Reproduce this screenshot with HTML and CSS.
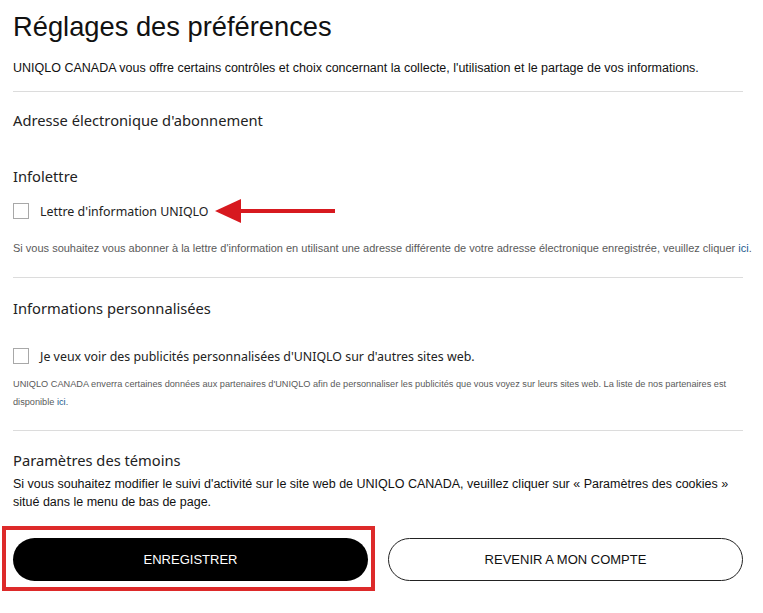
FILE: index.html
```html
<!DOCTYPE html>
<html lang="fr">
<head>
<meta charset="utf-8">
<title>Réglages des préférences</title>
<link rel="stylesheet" href="styles.css">
</head>
<body>
<main class="page">
  <h1 class="title">Réglages des préférences</h1>
  <p class="intro">UNIQLO CANADA vous offre certains contrôles et choix concernant la collecte, l'utilisation et le partage de vos informations.</p>
  <hr class="divider">

  <section class="sec sec-email">
    <h2 class="sec-title">Adresse électronique d'abonnement</h2>
  </section>

  <section class="sec sec-news">
    <h2 class="sec-title">Infolettre</h2>
    <label class="check-row">
      <span class="box"></span>
      <span class="check-label">Lettre d'information UNIQLO</span>
      <svg class="arrow" width="122" height="28" viewBox="0 0 122 28" aria-hidden="true">
        <polygon points="0,14 26,2 26,26" fill="#d7191f"/>
        <rect x="24" y="12" width="96" height="4" fill="#d7191f"/>
      </svg>
    </label>
    <p class="note">Si vous souhaitez vous abonner à la lettre d'information en utilisant une adresse différente de votre adresse électronique enregistrée, veuillez cliquer <a href="#" class="link">ici</a>.</p>
  </section>
  <hr class="divider">

  <section class="sec sec-ads">
    <h2 class="sec-title">Informations personnalisées</h2>
    <label class="check-row check-row-ads">
      <span class="box"></span>
      <span class="check-label">Je veux voir des publicités personnalisées d'UNIQLO sur d'autres sites web.</span>
    </label>
    <p class="note note-small">UNIQLO CANADA enverra certaines données aux partenaires d'UNIQLO afin de personnaliser les publicités que vous voyez sur leurs sites web. La liste de nos partenaires est disponible <a href="#" class="link">ici</a>.</p>
  </section>
  <hr class="divider">

  <section class="sec sec-cookies">
    <h2 class="sec-title">Paramètres des témoins</h2>
    <p class="cookie-text">Si vous souhaitez modifier le suivi d'activité sur le site web de UNIQLO CANADA, veuillez cliquer sur « Paramètres des cookies » situé dans le menu de bas de page.</p>
  </section>

  <div class="actions">
    <div class="btn-wrap">
      <button class="btn btn-primary" type="button">ENREGISTRER</button>
      <span class="highlight" aria-hidden="true"></span>
    </div>
    <button class="btn btn-outline" type="button">REVENIR A MON COMPTE</button>
  </div>
</main>
</body>
</html>
```
FILE: styles.css
```css
* { box-sizing: border-box; }
html, body { margin: 0; padding: 0; background: #fff; }
body {
  font-family: "Liberation Sans", Arial, sans-serif;
  color: #111;
  min-height: 613px;
}
.page {
  width: 763px;
  padding: 11px 10px 30px 13px;
}
.title {
  margin: 0;
  font-size: 27.3px;
  line-height: 32px;
  font-weight: 400;
  color: #111;
}
.intro {
  margin: 16px 0 0;
  font-size: 12.5px;
  line-height: 18px;
  width: 740px;
}
.divider {
  width: 730px;
  margin: 14px 0 0;
  border: 0;
  border-top: 1px solid #dcdcdc;
  height: 0;
}
.sec-title {
  margin: 0;
  font-family: "Noto Sans", "Open Sans", sans-serif;
  font-size: 14.7px;
  font-weight: 400;
  line-height: 20px;
  color: #222;
}
.sec-email { padding-top: 18px; height: 74px; }
.sec-news { padding-bottom: 7px; }
.check-row {
  display: flex;
  align-items: center;
  margin-top: 16px;
  height: 18px;
}
.box {
  width: 16px;
  height: 16px;
  border: 1px solid #a8a8a8;
  background: #fff;
  flex: none;
}
.check-label {
  margin-left: 11px;
  font-family: "Noto Sans", "Open Sans", sans-serif;
  font-size: 12.4px;
  color: #222;
  white-space: nowrap;
}
.arrow { margin-left: 6px; flex: none; }
.note {
  margin: 20px 0 0;
  font-size: 11px;
  line-height: 16px;
  color: #5a5a5a;
  white-space: nowrap;
}
.link { color: #1b5a8e; text-decoration: none; }
.sec-ads { padding-top: 20px; padding-bottom: 5px; }
.check-row-ads { margin-top: 29px; }
.note-small {
  margin-top: 10px;
  font-size: 9.2px;
  line-height: 18px;
  white-space: normal;
  width: 730px;
  padding-right: 4px;
}
.sec-cookies { padding-top: 19px; }
.cookie-text {
  margin: 5px 0 0;
  font-size: 12.5px;
  line-height: 18px;
  color: #111;
  width: 730px;
}
.actions {
  display: grid;
  grid-template-columns: 1fr 1fr;
  gap: 20px;
  margin-top: 27px;
  width: 730px;
}
.btn-wrap { position: relative; display: flex; }
.btn {
  width: 100%;
  height: 43px;
  border-radius: 22px;
  font-family: "Liberation Sans", Arial, sans-serif;
  font-size: 13px;
  cursor: pointer;
  padding: 0;
}
.btn-primary {
  background: #000;
  color: #fff;
  border: 0;
}
.btn-outline {
  background: #fff;
  color: #111;
  border: 1px solid #222;
}
.highlight {
  position: absolute;
  left: -11px;
  right: -7px;
  top: -12px;
  bottom: -10px;
  border: 4px solid #dd2a2a;
  pointer-events: none;
}
```
